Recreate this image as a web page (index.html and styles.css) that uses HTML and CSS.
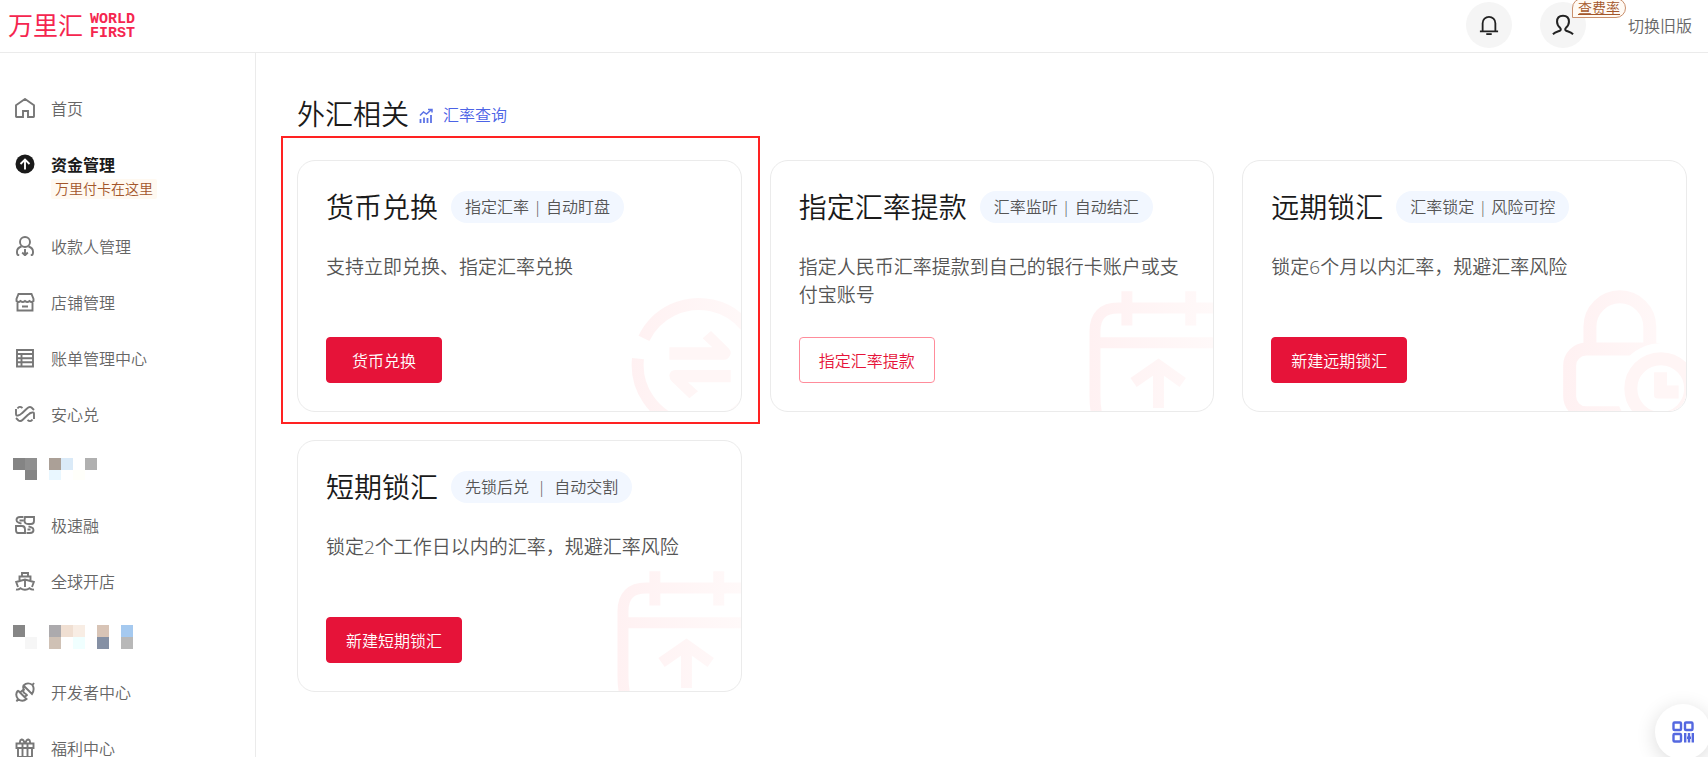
FILE: index.html
```html
<!DOCTYPE html>
<html lang="zh-CN">
<head>
  <meta charset="UTF-8" />
  <meta name="viewport" content="width=device-width, initial-scale=1.0" />
  <title>万里汇 | 外汇相关</title>
  <link rel="stylesheet" href="styles.css">
</head>

<body>
  <!-- Shared drawings -->
  <svg class="defs" aria-hidden="true">
    <defs>
      <linearGradient id="fade" gradientUnits="userSpaceOnUse" x1="0" y1="0" x2="373" y2="0">
        <stop offset="0" stop-color="#fff1f2" />
        <stop offset="1" stop-color="#fff9f9" />
      </linearGradient>
      <symbol id="art-calendar" viewBox="0 0 373 364">
        <g fill="none" stroke="url(#fade)" stroke-width="33">
          <path d="M23 372Q18 350 18 320V124Q18 54 88 54H380M18 159H380M114 4V107M306 4V107" />
          <path d="M134 278L209 226L282 278" />
          <path d="M209 222V355" />
        </g>
      </symbol>
    </defs>
  </svg>

  <header class="header">
    <a class="logo" href="#">
      <span class="logo-cn">万里汇</span>
      <span class="logo-en">WORLD<br>FIRST</span>
    </a>
    <div class="header-actions">
      <button class="round-btn" type="button" aria-label="消息">
        <svg width="20" height="22" viewBox="0 0 22 24" fill="none" stroke="#222" stroke-width="2">
          <path d="M4 19V10a7 7 0 0 1 14 0v9M1 19h20" />
          <path d="M8 22h6" stroke-width="2" />
        </svg>
      </button>
      <div class="user">
        <button class="round-btn" type="button" aria-label="账户">
          <svg width="22" height="22" viewBox="0 0 24 24" fill="none" stroke="#222" stroke-width="2.200">
            <path d="M1 22C3.500 19.800 7 19 8.500 18.300c1.500-.700 1.300-2.200.300-3.200C7 13.500 5.500 11.500 5.500 8.500 5.500 4.500 8 2 12 2s6.500 2.500 6.500 6.500c0 3-1.500 5-3.300 6.600-1 1-1.200 2.500.300 3.200 1.500.700 5 1.500 7.500 3.700" />
          </svg>
        </button>
        <a class="rate-tag" href="#">查费率</a>
      </div>
      <a class="switch-link" href="#">切换旧版</a>
    </div>
  </header>

  <div class="layout">
    <nav class="sidebar">
      <ul class="nav">
        <li>
          <a class="nav-item" href="#">
            <svg class="nav-icon" viewBox="0 0 20 20"><path d="M1 7.200L10 1l9 6.200V18.500q0 .500-.500.500H13v-6H8v6H1.500q-.500 0-.500-.500z" /></svg>
            首页
          </a>
        </li>
        <li class="nav-current">
          <a class="nav-item active" href="#">
            <svg class="nav-icon" viewBox="0 0 20 20"><circle cx="10" cy="10" r="9.500" fill="#1a1a1a" stroke="none" /><path d="M10 15.500V6M5.500 10L10 5.500l4.500 4.500" stroke="#fff" /></svg>
            资金管理
          </a>
          <span class="nav-tip">万里付卡在这里</span>
        </li>
        <li>
          <a class="nav-item" href="#">
            <svg class="nav-icon" viewBox="0 0 20 20"><circle cx="10" cy="6" r="5" /><path d="M6.500 10.500Q2 12 2 15.500V17q0 2 2.200 2.500M13.500 10.500Q18 12 18 15.500V17q0 2-2.200 2.500M10 13v6.500M7.200 16.500l2.800 2.800 2.800-2.800" /></svg>
            收款人管理
          </a>
        </li>
        <li>
          <a class="nav-item" href="#">
            <svg class="nav-icon" viewBox="0 0 20 20"><path d="M3.500 2h13L18.500 7v2q-2 2-4 0-2.200 2-4.500 0-2.200 2-4.500 0-2 2-4 0V7zM2.500 10v8.500h15V10M7 14.500h6" /></svg>
            店铺管理
          </a>
        </li>
        <li>
          <a class="nav-item" href="#">
            <svg class="nav-icon" viewBox="0 0 20 20"><path d="M2 2h16v16.500H2zM2 6h16M2 10.200h16M2 14.300h16M6.500 6v12.500" /></svg>
            账单管理中心
          </a>
        </li>
        <li>
          <a class="nav-item" href="#">
            <svg class="nav-icon" viewBox="0 0 20 20"><path d="M2.500 4.500Q4.500 1.500 7.500 4M1 5v5q0 2 2 1.500 2-.300 4-2.300l5-4.700Q14.500 2 16.500 3.500L19 6M17.500 15.500q-2 3-5 .500M19 15v-5q0-2-2-1.500-2 .300-4 2.300l-5 4.700Q5.500 18 3.500 16.500L1 14" /></svg>
            安心兑
          </a>
        </li>
        <li>
          <a class="nav-item masked" href="#" aria-label="菜单">
            <svg width="84" height="24" viewBox="0 0 84 24" shape-rendering="crispEdges">
              <path fill="#848484" d="M0 0h12v12H0zM12 12h12v10H12z" />
              <path fill="#8f8f8f" d="M12 0h12v12H12z" />
              <path fill="#aba097" d="M36 0h12v12H36z" />
              <path fill="#daeaf8" d="M48 0h12v12H48z" />
              <path fill="#b0b0b0" d="M72 0h12v12H72z" />
              <path fill="#e9f7ff" d="M36 12h12v10H36z" />
              <path fill="#fffffa" d="M60 12h12v10H60z" />
            </svg>
          </a>
        </li>
        <li>
          <a class="nav-item" href="#">
            <svg class="nav-icon" viewBox="0 0 20 20"><path d="M8.500 2H5Q1.500 2 1.500 5q0 2 2 2.700l3 1M10 2h9v4q0 3-3 3h-3Q9.500 9 9.500 5.500zM11.500 18H15q3.500 0 3.500-3 0-2-2-2.700l-3-1M10 18H3q-2 0-2-3v-4h6q3 0 3 3.500zM4.500 5.500h4M12.500 14.500h3" /></svg>
            极速融
          </a>
        </li>
        <li>
          <a class="nav-item" href="#">
            <svg class="nav-icon" viewBox="0 0 20 20"><path d="M7 5V2h6v3M4.500 9V5.500h11V9M3 16l-1.800-5L10 8.500l8.800 2.500L17 16M10 9v7M1 18.500q2.500.500 4.500-1.300 2 1.500 4.500 1.500t4.500-1.500q2 1.800 4.500 1.300" /></svg>
            全球开店
          </a>
        </li>
        <li>
          <a class="nav-item masked" href="#" aria-label="菜单">
            <svg width="120" height="24" viewBox="0 0 120 24" shape-rendering="crispEdges">
              <path fill="#868686" d="M0 0h12v12H0z" />
              <path fill="#f6f6f6" d="M12 12h12v12H12z" />
              <path fill="#acaaad" d="M36 0h12v12H36z" />
              <path fill="#f0dfd2" d="M48 0h12v12H48z" />
              <path fill="#f8ede4" d="M60 0h12v12H60z" />
              <path fill="#d8c4b6" d="M84 0h12v12H84z" />
              <path fill="#a5c9ef" d="M108 0h12v12h-12z" />
              <path fill="#cfc1b5" d="M36 12h12v12H36z" />
              <path fill="#f0ffff" d="M60 12h12v12H60z" />
              <path fill="#8590a4" d="M84 12h12v12H84z" />
              <path fill="#b8b8b8" d="M108 12h12v12h-12z" />
            </svg>
          </a>
        </li>
        <li>
          <a class="nav-item" href="#">
            <svg class="nav-icon" viewBox="0 0 20 20"><path d="M8.500 3.500L17 12q3-4.500.500-9L19 1M17.500 3Q12.500-.500 8.500 3.500 7.500 6 9.500 8.500M3 8.500L11.500 17q-4 3.500-8.500 0L1.500 19.500M3 17Q-.500 12.500 3 8.500M5 10.500L8 8q0 2.500 2 3.500t2 1.500L9.500 15" /></svg>
            开发者中心
          </a>
        </li>
        <li>
          <a class="nav-item" href="#">
            <svg class="nav-icon" viewBox="0 0 20 20"><path d="M1.500 5.500h17v4.500h-17zM3 10v9h14v-9M7.500 5.500V19M12.500 5.500V19M9.500 5.500Q9 1.500 6.500 1.500 4.500 2 5 5.500M10.500 5.500q.500-4 3-4 2 .500 1.500 4" /></svg>
            福利中心
          </a>
        </li>
      </ul>
    </nav>

    <main class="main">
      <div class="section-head">
        <h1>外汇相关</h1>
        <a class="rate-link" href="#">
          <svg width="14" height="16" viewBox="0 0 14 16" fill="none" stroke="#5c73e6" stroke-width="1.800">
            <path d="M1.500 16v-4M5 16v-5.500M8.500 16v-5M12 16V8" />
            <path d="M1 8.500L4.500 5 7.500 7 12 3M9 2.500h4v3" stroke-width="1.500" />
          </svg>
          汇率查询
        </a>
      </div>

      <div class="cards">
        <div class="card-wrap highlight">
          <section class="card">
            <svg class="card-art" width="110" height="115" viewBox="0 0 330 345" aria-hidden="true">
              <g fill="none" stroke="url(#fade)" stroke-width="36">
                <path d="M39 127A182 182 0 0 1 385 205" />
                <path d="M21 188A182 182 0 0 0 367 284" />
              </g>
              <g fill="#fff6f6">
                <path d="M115 154H244L215 127L240 105L292 156Q300 163 299 173Q294 191 278 191H115z" />
                <path d="M299 259H171L201 286L175 307L122 256Q115 249 115 238Q117 222 136 222H299z" />
              </g>
            </svg>
            <div class="card-title"><h2>货币兑换</h2><span class="tag">指定汇率 | 自动盯盘</span></div>
            <p class="card-desc">支持立即兑换、指定汇率兑换</p>
            <button class="btn btn-primary" type="button">货币兑换</button>
          </section>
        </div>

        <div class="card-wrap">
          <section class="card">
            <svg class="card-art" width="124" height="121" aria-hidden="true"><use href="#art-calendar" /></svg>
            <div class="card-title"><h2>指定汇率提款</h2><span class="tag">汇率监听 | 自动结汇</span></div>
            <p class="card-desc">指定人民币汇率提款到自己的银行卡账户或支付宝账号</p>
            <button class="btn btn-outline" type="button">指定汇率提款</button>
          </section>
        </div>

        <div class="card-wrap">
          <section class="card">
            <svg class="card-art" width="123" height="122" viewBox="0 0 370 366" aria-hidden="true">
              <g fill="none" stroke="url(#fade)" stroke-width="39">
                <path d="M81 162V113A90 90 0 0 1 261 113V180" />
                <rect x="20" y="180" width="300" height="192" rx="50" />
              </g>
              <circle cx="294" cy="299" r="136" fill="#fff" />
              <circle cx="294" cy="299" r="90" fill="none" stroke="#fff5f5" stroke-width="39" />
              <path d="M274 250H313V290H348V329H284Q274 329 274 319z" fill="#fff6f6" />
            </svg>
            <div class="card-title"><h2>远期锁汇</h2><span class="tag">汇率锁定 | 风险可控</span></div>
            <p class="card-desc">锁定6个月以内汇率，规避汇率风险</p>
            <button class="btn btn-primary" type="button">新建远期锁汇</button>
          </section>
        </div>

        <div class="card-wrap">
          <section class="card">
            <svg class="card-art" width="124" height="121" aria-hidden="true"><use href="#art-calendar" /></svg>
            <div class="card-title"><h2>短期锁汇</h2><span class="tag">先锁后兑&nbsp; | &nbsp;自动交割</span></div>
            <p class="card-desc">锁定2个工作日以内的汇率，规避汇率风险</p>
            <button class="btn btn-primary" type="button">新建短期锁汇</button>
          </section>
        </div>
      </div>
    </main>
  </div>

  <button class="float-btn" type="button" aria-label="二维码">
    <svg width="22" height="22" viewBox="0 0 22 22" fill="none" stroke="#5468e0" stroke-width="2.400">
      <rect x="1.500" y="1.500" width="7.500" height="7.500" rx="1" />
      <rect x="13" y="1.500" width="7.500" height="7.500" rx="1" />
      <rect x="1.500" y="13" width="7.500" height="7.500" rx="1" />
      <path d="M13.200 12v9.500M20.800 12v9.500M17 12v3.500M17 18v3.500M15 16.800h4" />
    </svg>
  </button>
</body>
</html>
```

FILE: styles.css
```css
* {
  box-sizing: border-box;
}

body {
  display: flex;
  flex-direction: column;
  height: 100vh;
  margin: 0;
  overflow: hidden;
  background: #fff;
  color: #1a1a1a;
  font-family: "Open Sans", "Noto Sans CJK SC", sans-serif;
  font-size: 16px;
  font-weight: 350;
}

a {
  color: inherit;
  text-decoration: none;
}

button {
  font: inherit;
  cursor: pointer;
}

h1, h2, p, ul {
  margin: 0;
  padding: 0;
}

h1, h2 {
  font-size: 28px;
  font-weight: 350;
  white-space: nowrap;
}

.defs {
  position: absolute;
  width: 0;
  height: 0;
}

/* Header */
.header {
  display: flex;
  flex: none;
  align-items: center;
  justify-content: space-between;
  height: 53px;
  padding: 0 16px 3px 8px;
  border-bottom: 1px solid #ebebeb;
}

.logo {
  display: flex;
  align-items: center;
  gap: 7px;
  color: #f5264f;
}

.logo-cn {
  font-size: 25px;
  font-weight: 400;
  line-height: 32px;
}

.logo-en {
  padding-top: 4px;
  font-family: "Liberation Mono", monospace;
  font-size: 15px;
  font-weight: 700;
  line-height: 14px;
}

.header-actions {
  display: flex;
  align-items: center;
  color: #666;
}

.round-btn {
  display: flex;
  align-items: center;
  justify-content: center;
  width: 46px;
  height: 46px;
  padding: 0;
  border: none;
  border-radius: 50%;
  background: #f5f5f5;
}

.user {
  position: relative;
  margin: 0 42px 0 28px;
}

.rate-tag {
  position: absolute;
  top: -4px;
  left: 32px;
  padding: 0 5px;
  border: 1px solid #c98f6c;
  border-radius: 10px 10px 10px 0;
  background: #fffaf4;
  color: #a3562a;
  font-size: 14px;
  line-height: 18px;
  text-decoration: underline;
  white-space: nowrap;
}

/* Sidebar */
.layout {
  display: flex;
  flex: 1;
  min-height: 0;
}

.sidebar {
  flex: none;
  width: 256px;
  padding-top: 27px;
  border-right: 1px solid #ebebeb;
}

.nav {
  list-style: none;
}

.nav-item {
  display: flex;
  align-items: center;
  gap: 16px;
  height: 56px;
  padding-left: 15px;
  color: #666;
}

.nav-item.active {
  color: #1a1a1a;
  font-weight: 700;
}

.nav-item.masked {
  height: 55px;
  padding-left: 13px;
}

.nav-icon {
  width: 20px;
  height: 20px;
  fill: none;
  stroke: #777;
  stroke-width: 1.9;
}

.nav-current {
  height: 82px;
}

.nav-tip {
  display: block;
  width: max-content;
  margin: -13px 0 0 51px;
  padding: 0 4px;
  border-radius: 2px;
  background: #fff9f1;
  color: #a3562a;
  font-size: 14px;
  line-height: 20px;
}

/* Main */
.main {
  flex: 1;
  min-width: 0;
  padding: 40px 21px 28px 41px;
}

.section-head {
  display: flex;
  align-items: center;
  gap: 10px;
  margin-bottom: 25px;
  line-height: 40px;
}

.rate-link {
  display: flex;
  align-items: center;
  gap: 10px;
  padding-top: 2px;
  color: #4c63e6;
}

.cards {
  display: grid;
  grid-template-columns: repeat(3, 1fr);
  gap: 28px;
}

.card-wrap {
  position: relative;
}

.highlight::after {
  content: "";
  position: absolute;
  inset: -24px -18px -12px -16px;
  border: 2px solid #ff2222;
  pointer-events: none;
}

.card {
  position: relative;
  height: 100%;
  padding: 28px;
  overflow: hidden;
  border: 1px solid #ebebeb;
  border-radius: 18px;
}

.card-art {
  position: absolute;
  right: 0;
  bottom: 0;
}

.card-title {
  display: flex;
  align-items: center;
  gap: 13px;
  line-height: 36px;
}

.tag {
  padding: 0 14px;
  border-radius: 16px;
  background: #f2f7ff;
  color: #555;
  line-height: 32px;
  white-space: nowrap;
}

.card-desc {
  position: relative;
  min-height: 56px;
  margin: 28px 0;
  color: #555;
  font-size: 19px;
  line-height: 28px;
}

.btn {
  display: block;
  min-width: 116px;
  height: 46px;
  padding: 0 19px;
  border: 1px solid #e61339;
  border-radius: 4px;
}

.btn-primary {
  background: #e61339;
  color: #fff;
}

.btn-outline {
  border-color: #ff8c9b;
  background: #fff;
  color: #e61339;
}

.float-btn {
  position: fixed;
  right: -3px;
  bottom: -3px;
  display: flex;
  align-items: center;
  justify-content: center;
  width: 56px;
  height: 56px;
  padding: 0;
  border: none;
  border-radius: 50%;
  background: #fff;
  box-shadow: 0 4px 20px rgba(0, 0, 0, 0.14);
}
```
